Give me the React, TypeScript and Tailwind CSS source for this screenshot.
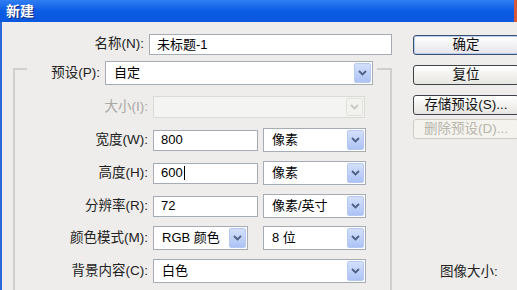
import type { ReactNode } from 'react'

const font = { fontFamily: '"Liberation Sans", "Noto Sans CJK SC", sans-serif' }

function Arrow({ disabled }: { disabled?: boolean }) {
  return (
    <div
      className={
        'ml-auto mr-[1px] flex h-[calc(100%-2px)] w-[17px] items-center justify-center rounded-[2px] ' +
        (disabled ? 'bg-[#f2f2ef] border border-[#e2e2dc]' : 'bg-gradient-to-b from-[#d3e0fb] to-[#adc3f4] border border-[#b6c9f2]')
      }
    >
      <svg width="9" height="6" viewBox="0 0 9 6">
        <path d="M1 1 L4.5 4.5 L8 1" fill="none" stroke={disabled ? '#c9c9c4' : '#4d6185'} strokeWidth="1.8" />
      </svg>
    </div>
  )
}

function Select({ w, h = 24, value, disabled }: { w: string; h?: number; value?: string; disabled?: boolean }) {
  return (
    <div
      className={`${w} flex items-center border ${disabled ? 'border-[#dadad6] bg-[#f4f4f2]' : 'border-[#a5acb5] bg-white'}`}
      style={{ height: h }}
    >
      {value && <span className="pl-[8px] text-[13px] text-black">{value}</span>}
      <Arrow disabled={disabled} />
    </div>
  )
}

function Input({ w, value, caret }: { w: string; value: string; caret?: boolean }) {
  return (
    <div className={`${w} flex h-[21px] items-center border border-[#a5acb5] bg-white pl-[7px] text-[13px] text-black`}>
      {value}
      {caret && <span className="ml-[1px] h-[14px] w-[1px] bg-black" />}
    </div>
  )
}

function Row({ label, children, mt, muted }: { label: string; children: ReactNode; mt: string; muted?: boolean }) {
  return (
    <div className={`${mt} flex h-[24px] items-center`}>
      <div className={`w-[133px] text-right text-[13.5px] ${muted ? 'text-[#a8a8a4]' : 'text-[#222]'}`}>{label}</div>
      <div className="ml-[5px] flex items-center gap-[5px]">{children}</div>
    </div>
  )
}

function Button({ label, disabled, main, mt }: { label: string; disabled?: boolean; main?: boolean; mt: string }) {
  return (
    <div
      className={
        `${mt} flex h-[20px] w-[106px] items-center justify-center rounded-[3px] border text-[13.5px] ` +
        (disabled
          ? 'border-[#cfcdc3] bg-[#f4f3ee] text-[#b8b6ad]'
          : main
            ? 'border-[#3c4f6e] bg-gradient-to-b from-[#ffffff] to-[#e6e6ea] text-[#111] shadow-[inset_0_0_0_1px_#b8cdf0]'
            : 'border-[#3d4148] bg-gradient-to-b from-[#ffffff] to-[#e6e5e0] text-[#111]')
      }
    >
      {label}
    </div>
  )
}

export default function App() {
  return (
    <div className="h-[290px] w-[517px] overflow-hidden bg-[#eeedeb]" style={font}>
      {/* title bar */}
      <div className="flex h-[22px] items-center bg-gradient-to-b from-[#2f7ef4] via-[#0b5ce4] to-[#0a58de]">
        <span className="pl-[6px] text-[14px] font-bold text-white [text-shadow:1px_1px_0_#0a2a80]">新建</span>
        <div className="ml-auto h-full w-[3px] bg-[#d9593b]" />
      </div>

      <div className="flex h-[268px] border-l-[2px] border-[#2d66d8]">
        {/* form */}
        <div className="w-[390px] shrink-0">
          <div className="mt-[12px] flex h-[21px] items-center">
            <div className="w-[146px] text-right text-[13.5px] text-[#222]">名称(N):</div>
            <div className="ml-[5px]">
              <Input w="w-[243px]" value="未标题-1" />
            </div>
          </div>

          <div className="ml-[11px] mt-[13px] h-[240px] border-l-[2px] border-r-[2px] border-t-[2px] border-l-[#cfcfcb] border-r-[#cfcfcb] border-t-[#cfcfcb]">
            <div className="-mt-[9px] ml-[12px] flex h-[24px] w-[350px] items-center bg-[#eeedeb]">
              <div className="w-[73px] text-right text-[13.5px] text-[#222]">预设(P):</div>
              <div className="ml-[5px]">
                <Select w="w-[268px]" value="自定" />
              </div>
            </div>

            <Row label="大小(I):" mt="mt-[10px]" muted>
              <Select w="w-[212px]" h={22} disabled />
            </Row>
            <Row label="宽度(W):" mt="mt-[9px]">
              <Input w="w-[105px]" value="800" />
              <Select w="w-[103px]" value="像素" />
            </Row>
            <Row label="高度(H):" mt="mt-[9px]">
              <Input w="w-[105px]" value="600" caret />
              <Select w="w-[103px]" value="像素" />
            </Row>
            <Row label="分辨率(R):" mt="mt-[9px]">
              <Input w="w-[105px]" value="72" />
              <Select w="w-[103px]" value="像素/英寸" />
            </Row>
            <Row label="颜色模式(M):" mt="mt-[8px]">
              <Select w="w-[95px]" value="RGB 颜色" />
              <div className="ml-[10px]">
                <Select w="w-[103px]" value="8 位" />
              </div>
            </Row>
            <Row label="背景内容(C):" mt="mt-[9px]">
              <Select w="w-[213px]" value="白色" />
            </Row>
          </div>
        </div>

        {/* buttons */}
        <div className="ml-[21px] flex flex-col">
          <Button label="确定" main mt="mt-[13px]" />
          <Button label="复位" mt="mt-[10px]" />
          <Button label="存储预设(S)..." mt="mt-[10px]" />
          <Button label="删除预设(D)..." disabled mt="mt-[4px]" />
          <div className="ml-[27px] mt-auto mb-[8px] text-[13.5px] text-[#222]">图像大小:</div>
        </div>
      </div>
    </div>
  )
}
